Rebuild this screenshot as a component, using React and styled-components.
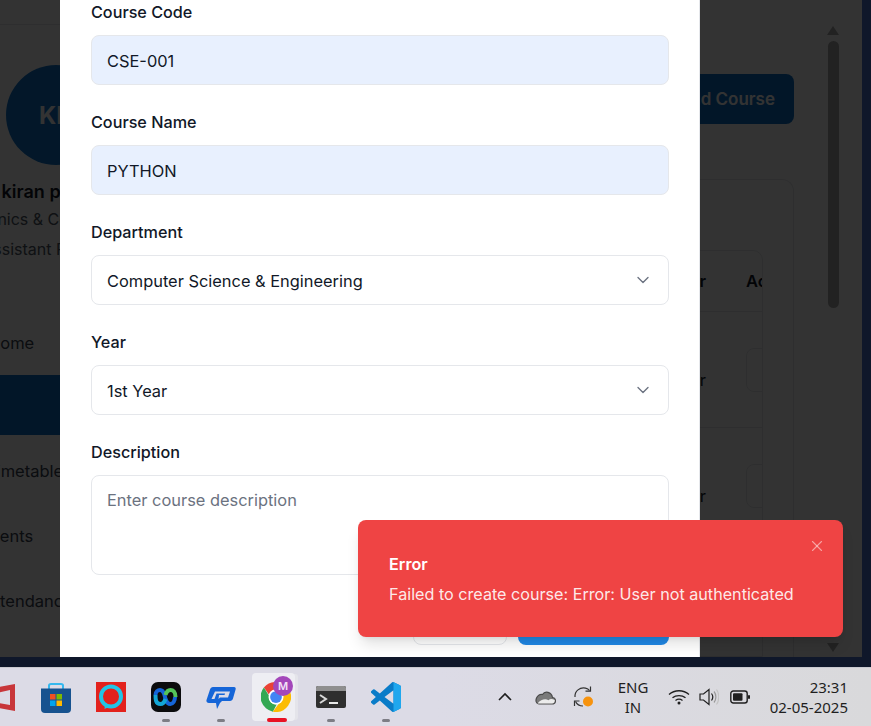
import React from "react";
import styled, { createGlobalStyle } from "styled-components";
import { ChevronDown, X } from "lucide-react";

const GlobalStyle = createGlobalStyle`
  html, body {
    margin: 0;
    padding: 0;
    height: 100%;
    overflow: hidden;
  }
  * { box-sizing: border-box; }
  body {
    font-family: Inter, "Noto Sans", "Liberation Sans", sans-serif;
    color: #111827;
    background: #0f172a;
  }
`;

const Screen = styled.div`
  width: 871px;
  height: 726px;
  display: flex;
  flex-direction: column;
  background: #0f172a;
`;
const BrowserArea = styled.div`
  height: 667px;
  padding: 0 9px 10px 0;
`;
const Viewport = styled.div`
  position: relative;
  height: 657px;
  overflow: hidden;
  background: #fff;
`;
const Shell = styled.div`
  display: flex;
  height: 100%;
  margin-left: -64px;
`;
const Sidebar = styled.aside`
  width: 240px;
  flex: none;
  padding-top: 24px;
  text-align: center;
  border-right: 1px solid #e5e7eb;
`;
const ProfileRule = styled.div`
  border-top: 1px solid #e5e7eb;
  padding-top: 40px;
`;
const Avatar = styled.div`
  width: 100px;
  height: 100px;
  margin: 0 auto 15px;
  border-radius: 50%;
  background: #0f74cc;
  color: #fff;
  font-size: 24px;
  font-weight: 700;
  display: flex;
  align-items: center;
  justify-content: center;
`;
const ProfileName = styled.div`
  font-size: 18px;
  font-weight: 600;
  line-height: 24px;
  white-space: nowrap;
`;
const ProfileLine = styled.div`
  font-size: 16px;
  line-height: 30px;
  color: #4b5563;
  white-space: nowrap;
`;
const NavList = styled.nav`
  margin-top: 46px;
  text-align: left;
`;
const NavItem = styled.div`
  height: ${(p) => (p.$active ? 60 : 65)}px;
  margin-bottom: ${(p) => (p.$active ? 3 : 0)}px;
  display: flex;
  align-items: center;
  padding-left: ${(p) => p.$indent}px;
  font-size: 16.500px;
  color: #374151;
  background: ${(p) => (p.$active ? "#0b6fc8" : "transparent")};
`;
const Main = styled.main`
  flex: 1;
  min-width: 0;
  padding: 74px 30px 0 24px;
  display: flex;
  flex-direction: column;
  align-items: flex-end;
`;
const AddButton = styled.div`
  height: 50px;
  padding: 0 19px;
  border-radius: 8px;
  background: #0b6fc8;
  color: #fff;
  font-size: 17px;
  font-weight: 600;
  display: flex;
  align-items: center;
`;
const Card = styled.section`
  width: 100%;
  flex: 1;
  margin-top: 55px;
  padding: 70px 30px 0;
  border: 1px solid #e5e7eb;
  border-bottom: 0;
  border-radius: 12px 12px 0 0;
`;
const TableBox = styled.div`
  border: 1px solid #e5e7eb;
  border-radius: 10px 10px 0 0;
  overflow: hidden;
  height: 100%;
`;
const TableRow = styled.div`
  height: ${(p) => (p.$head ? 61 : 116)}px;
  display: flex;
  align-items: ${(p) => (p.$head ? "center" : "flex-start")};
  justify-content: flex-end;
  border-bottom: 1px solid #e5e7eb;
  font-size: 16.500px;
  font-weight: ${(p) => (p.$head ? 600 : 400)};
`;
const YearCell = styled.span`
  width: 46px;
  text-align: right;
  margin-top: ${(p) => (p.$body ? 58 : 0)}px;
  color: #111827;
`;
const ActionCell = styled.span`
  width: 56px;
  padding-left: 40px;
  white-space: nowrap;
`;
const ActionButton = styled.div`
  width: 60px;
  height: 44px;
  margin-top: 36px;
  border: 1px solid #e5e7eb;
  border-radius: 8px;
  flex: none;
`;
const ActionSlot = styled.div`
  width: 56px;
  flex: none;
  padding-left: 40px;
`;
const Rail = styled.div`
  width: 38px;
  flex: none;
  display: flex;
  flex-direction: column;
  align-items: flex-start;
  padding: 26px 0 0 4px;
  background: #fff;
`;
const RailThumb = styled.div`
  width: 11px;
  height: 267px;
  margin-top: 6px;
  border-radius: 6px;
  background: #a8a8a8;
`;
const RailArrow = styled.div`
  width: 0;
  height: 0;
  margin-left: -1px;
  border-left: 6.5px solid transparent;
  border-right: 6.5px solid transparent;
  ${(p) => (p.$down ? "border-top" : "border-bottom")}: 9px solid #a8a8a8;
`;
const RailBottom = styled.div`
  margin-top: auto;
  margin-bottom: 5px;
`;
const Backdrop = styled.div`
  position: absolute;
  inset: 0;
  background: rgba(0, 0, 0, 0.8);
`;
const Modal = styled.form`
  position: absolute;
  top: 0;
  bottom: 0;
  left: 60px;
  width: 640px;
  padding: 0 30px 0 31px;
  background: #fff;
  border-right: 1px solid #e5e7eb;
  overflow: hidden;
`;
const Field = styled.div`
  margin-bottom: 25px;
`;
const Label = styled.label`
  display: block;
  height: 24px;
  margin-bottom: 11px;
  font-size: 16.200px;
  font-weight: 500;
  line-height: 24px;
  color: #111827;
`;
const TextInput = styled.input`
  display: block;
  width: 100%;
  height: 50px;
  padding: 2px 15px 0;
  border: 1px solid #e5e7eb;
  border-radius: 8px;
  background: #e8f0fe;
  color: #111827;
  font: inherit;
  font-size: 16.400px;
  outline: none;
`;
const SelectBox = styled.div`
  height: 50px;
  padding: 2px 15px 0;
  border: 1px solid #e5e7eb;
  border-radius: 8px;
  display: flex;
  align-items: center;
  justify-content: space-between;
  font-size: 16.400px;
  color: #111827;
  svg { color: #6b7280; margin-top: -2px; }
`;
const TextArea = styled.textarea`
  display: block;
  width: 100%;
  height: 100px;
  padding: 14px 15px;
  border: 1px solid #e5e7eb;
  border-radius: 8px;
  font: inherit;
  font-size: 16.400px;
  resize: none;
  outline: none;
  &::placeholder { color: #6b7280; opacity: 1; }
`;
const Footer = styled.div`
  display: flex;
  justify-content: flex-end;
  gap: 11px;
  height: 45px;
`;
const CancelButton = styled.div`
  width: 94px;
  border: 1px solid #e5e7eb;
  border-radius: 8px;
`;
const SubmitButton = styled.div`
  width: 151px;
  border-radius: 8px;
  background: #2189e6;
`;
const Toast = styled.div`
  position: absolute;
  top: 520px;
  left: 358px;
  width: 485px;
  height: 117px;
  padding: 32px 31px;
  border-radius: 8px;
  background: #ef4444;
  color: #fff;
  box-shadow: 0 10px 15px -3px rgba(0, 0, 0, 0.12), 0 4px 6px -4px rgba(0, 0, 0, 0.1);
`;
const ToastTitle = styled.div`
  font-size: 16.200px;
  font-weight: 600;
  line-height: 24px;
`;
const ToastText = styled.div`
  margin-top: 6px;
  font-size: 16.160px;
  line-height: 24px;
  color: rgba(255, 255, 255, 0.9);
  white-space: nowrap;
`;
const ToastClose = styled.div`
  position: absolute;
  top: 17px;
  right: 17px;
  display: flex;
  color: rgba(255, 255, 255, 0.5);
`;
const Taskbar = styled.footer`
  height: 59px;
  display: flex;
  align-items: stretch;
  background: linear-gradient(90deg, #dcdbe6 0%, #dcdbe6 50%, #d9d9db 100%);
  border-top: 1px solid #c9c9d0;
`;
const AppGroup = styled.div`
  display: flex;
  margin-left: -27px;
`;
const AppSlot = styled.div`
  position: relative;
  width: 55px;
  display: flex;
  justify-content: center;
  padding-top: ${(p) => p.$top}px;
`;
const AppIcon = styled.div`
  position: relative;
  display: flex;
  height: fit-content;
`;
const RunDot = styled.span`
  position: absolute;
  left: 50%;
  bottom: 4px;
  width: 8px;
  height: 3px;
  margin-left: -4px;
  border-radius: 2px;
  background: #7d7d85;
`;
const ActiveTile = styled.div`
  position: absolute;
  top: 5px;
  left: 4px;
  width: 43px;
  height: 48px;
  border-radius: 4px;
  background: #eeeef3;
  box-shadow: 4px 0 0 -1px #e4e4ea;
`;
const ActiveBar = styled.span`
  position: absolute;
  left: 50%;
  bottom: 4px;
  width: 20px;
  height: 4px;
  margin-left: -9px;
  border-radius: 2px;
  background: #e81224;
`;
const ProfileBadge = styled.span`
  position: absolute;
  top: 8px;
  left: 25px;
  width: 20px;
  height: 20px;
  border-radius: 50%;
  background: #a347ba;
  color: #f3e3f7;
  font-size: 11px;
  font-weight: 600;
  display: flex;
  align-items: center;
  justify-content: center;
`;
const Tray = styled.div`
  margin-left: 72px;
  display: flex;
  align-items: center;
`;
const TraySlot = styled.div`
  width: ${(p) => p.$w}px;
  display: flex;
  justify-content: center;
  align-items: center;
`;
const LangBlock = styled.div`
  width: 60px;
  font-family: "Noto Sans", sans-serif;
  font-size: 15px;
  line-height: 20px;
  text-align: center;
  color: #1f1f1f;
`;
const Clock = styled.div`
  width: 90px;
  font-family: "Noto Sans", sans-serif;
  font-size: 15px;
  line-height: 20px;
  text-align: right;
  color: #1f1f1f;
  white-space: nowrap;
`;

const OfficeIcon = () => (
  <svg width="30" height="30" viewBox="0 0 30 30" fill="#c8363a">
    <path d="M29 2 8 6 1 11v9l7 5 21 4V2Zm-5 6v15L9 20.500V11.500L24 8Z" />
  </svg>
);
const StoreIcon = () => (
  <svg width="30" height="31" viewBox="0 0 30 31">
    <path d="M8 7V3.500C8 2.500 9 2 10 2h10c1 0 2 .5 2 1.500V7" fill="none" stroke="#35b8ee" strokeWidth="2" />
    <path d="M0 6.500h30V27a4 4 0 0 1-4 4H4a4 4 0 0 1-4-4Z" fill="#17528f" />
    <rect x="9" y="12" width="5.500" height="5.500" fill="#f25022" />
    <rect x="15.500" y="12" width="5.500" height="5.500" fill="#7fba00" />
    <rect x="9" y="18.500" width="5.500" height="5.500" fill="#00a4ef" />
    <rect x="15.500" y="18.500" width="5.500" height="5.500" fill="#ffb900" />
  </svg>
);
const AlexaIcon = () => (
  <svg width="30" height="30" viewBox="0 0 30 30">
    <rect width="30" height="30" fill="#e3211c" />
    <circle cx="15" cy="14.500" r="10" fill="none" stroke="#22c4e6" strokeWidth="4" />
    <path d="M9 22 8.500 27l6.500-3Z" fill="#22c4e6" />
  </svg>
);
const WebexIcon = () => (
  <svg width="30" height="30" viewBox="0 0 30 30">
    <rect width="30" height="30" rx="7" fill="#0b0b0d" />
    <path d="M4.500 13c0-3.500 2.500-5 4.500-5s3.500 1.500 4.500 5l1 4c1 3 2.500 5 5 5s4.500-3 4.500-7" fill="none" stroke="#1565d8" strokeWidth="4" />
    <path d="M4.500 13c0 4 0 9 5 9 2.500 0 4-2 5-5" fill="none" stroke="#12a5d6" strokeWidth="4" />
    <path d="M14.500 13c1-3.500 2.500-5 5-5s5 2 5 7" fill="none" stroke="#55c45a" strokeWidth="4" />
  </svg>
);
const ChatIcon = () => (
  <svg width="30" height="24" viewBox="0 0 30 24">
    <path d="M7 1h21c1.500 0 2 1 1.600 2.500l-2.600 9c-.4 1.500-1.500 2.500-3 2.500H16l-2 2-3 6-1-6H3c-2 0-3-1.500-2.500-3L4 3.500C4.500 2 5.500 1 7 1Z" fill="#1565d8" />
    <path d="M9 5.500h15l-2 6h-8l-1.500 1.500 .5-4h5.500l.6-1.500H10.500L8.500 13H5.500Z" fill="#dcdbe6" />
  </svg>
);
const ChromeIcon = () => (
  <svg width="30" height="30" viewBox="0 0 24 24">
    <path d="M12 0a12 12 0 0 1 10.400 6H12a6 6 0 0 0-5.700 4L2.300 4.400A12 12 0 0 1 12 0Z" fill="#ea4335" />
    <path d="M2.300 4.400 7 12a5 5 0 0 0 5.500 6l-3 5.700A12 12 0 0 1 2.300 4.400Z" fill="#34a853" />
    <path d="M22.400 6A12 12 0 0 1 9.500 23.700L15.500 15.500A5 5 0 0 0 16.500 8Z" fill="#fbbc04" />
    <circle cx="12" cy="12" r="6" fill="#fff" />
    <circle cx="12" cy="12" r="4.700" fill="#4285f4" />
  </svg>
);
const TerminalIcon = () => (
  <svg width="30" height="22" viewBox="0 0 30 22">
    <rect width="30" height="22" rx="2" fill="#2f2f2f" />
    <path d="M0 2a2 2 0 0 1 2-2h26a2 2 0 0 1 2 2v3H0Z" fill="#8f8f8f" />
    <path d="m4 9 6 4-6 4" fill="none" stroke="#d8d8d8" strokeWidth="2" />
    <path d="M13 17h9" stroke="#e8e8e8" strokeWidth="2" />
  </svg>
);
const VsCodeIcon = () => (
  <svg width="30" height="30" viewBox="0 0 24 24">
    <path d="M23.150 2.587 18.210.21a1.494 1.494 0 0 0-1.705.29l-9.460 8.630-4.120-3.128a.999.999 0 0 0-1.276.057L.327 7.261A1 1 0 0 0 .326 8.740L3.899 12 .326 15.260a1 1 0 0 0 .001 1.479L1.650 17.940a.999.999 0 0 0 1.276.057l4.120-3.128 9.460 8.630a1.492 1.492 0 0 0 1.704.29l4.942-2.377A1.500 1.500 0 0 0 24 20.060V3.939a1.500 1.500 0 0 0-.85-1.352zm-5.146 14.861L10.826 12l7.178-5.448v10.896z" fill="#0a7cc8" />
    <path d="M18 .2 23.150 2.587A1.500 1.500 0 0 1 24 3.939V20.060a1.500 1.500 0 0 1-.85 1.352L18 23.900v-6.450V6.552Z" fill="#1fa7ee" />
  </svg>
);
const TrayChevron = () => (
  <svg width="16" height="10" viewBox="0 0 16 10" fill="none" stroke="#1f1f1f" strokeWidth="1.600">
    <path d="m2 8 6-6 6 6" />
  </svg>
);
const CloudIcon = () => (
  <svg width="22" height="16" viewBox="0 0 22 16">
    <path d="M5 15h13c4.500 0 4.500-6 .5-6.500C17.500 3 11 1.500 8.500 5.500 3 4-1 14 5 15Z" fill="#7a7a7a" stroke="#4a4a4a" strokeWidth="1.200" />
    <path d="M3.500 14.400H18c2 0 3-1.500 2.800-3.400-3-1.500-5-1-6.300.2-3.500-2-7.500-.5-11 3.200Z" fill="#ececec" />
  </svg>
);
const SyncIcon = () => (
  <svg width="22" height="24" viewBox="0 0 22 24" fill="none" stroke="#333" strokeWidth="1.200">
    <path d="M2 12C1.500 6 7 2 12.500 3.200c1.500.3 3 1 4 2.300" />
    <path d="M12.500 6.200h5V1.500" />
    <path d="M2.500 16.500c1.200 2.500 4 4.500 7.500 4.500" />
    <path d="M1.500 21v-5h5" />
    <circle cx="15" cy="16.500" r="5" fill="#f7930e" stroke="none" />
  </svg>
);
const WifiIcon = () => (
  <svg width="22" height="16" viewBox="0 0 22 16" fill="none" stroke="#1f1f1f" strokeWidth="1.300">
    <path d="M1 5.500c5.500-5 14.500-5 20 0" />
    <path d="M4.500 8.800c3.500-3 9.500-3 13 0" />
    <path d="M7.500 11.500c2-1.500 5-1.500 7 0" />
    <circle cx="11" cy="14" r="1.500" fill="#1f1f1f" stroke="none" />
  </svg>
);
const SpeakerIcon = () => (
  <svg width="20" height="18" viewBox="0 0 20 18" fill="none" stroke="#1f1f1f" strokeWidth="1.200">
    <path d="M1 6v6h3.500L10 16.500V1.500L4.500 6Z" />
    <path d="M12.500 5.500c1.500 2 1.500 5 0 7" />
    <path d="M15 3.500c2.500 3 2.500 8 0 11" stroke="#999" />
    <path d="M17.500 1.500c3 4 3 11 0 15" stroke="#c4c4c4" />
  </svg>
);
const BatteryIcon = () => (
  <svg width="20" height="14" viewBox="0 0 20 14">
    <rect x=".8" y="1" width="16.400" height="12" rx="2.500" fill="none" stroke="#1f1f1f" strokeWidth="1.400" />
    <rect x="3" y="3.200" width="9.500" height="7.600" rx="1" fill="#1f1f1f" />
    <rect x="18" y="5" width="2" height="4" rx="1" fill="#1f1f1f" />
  </svg>
);

const apps = [
  { key: "office", top: 14, icon: <OfficeIcon /> },
  { key: "store", top: 14, icon: <StoreIcon /> },
  { key: "alexa", top: 14, icon: <AlexaIcon /> },
  { key: "webex", top: 14, icon: <WebexIcon />, running: true },
  { key: "chat", top: 18, icon: <ChatIcon />, running: true },
  { key: "chrome", top: 14, icon: <ChromeIcon />, active: true },
  { key: "terminal", top: 18, icon: <TerminalIcon />, running: true },
  { key: "code", top: 14, icon: <VsCodeIcon />, running: true },
];

export default function App() {
  return (
    <Screen>
      <GlobalStyle />
      <BrowserArea>
        <Viewport>
          <Shell>
            <Sidebar>
              <ProfileRule>
                <Avatar>KP</Avatar>
                <ProfileName>kiran prasad</ProfileName>
                <ProfileLine>Electronics &amp; Communication</ProfileLine>
                <ProfileLine>Assistant Professor</ProfileLine>
              </ProfileRule>
              <NavList>
                <NavItem $indent={52}>Home</NavItem>
                <NavItem $active $indent={140}>Courses</NavItem>
                <NavItem $indent={50}>Timetable</NavItem>
                <NavItem $indent={45}>Events</NavItem>
                <NavItem $indent={48}>Attendance</NavItem>
              </NavList>
            </Sidebar>
            <Main>
              <AddButton>Add Course</AddButton>
              <Card>
                <TableBox>
                  <TableRow $head>
                    <YearCell>Year</YearCell>
                    <ActionCell>Actions</ActionCell>
                  </TableRow>
                  <TableRow>
                    <YearCell $body>Year</YearCell>
                    <ActionSlot><ActionButton /></ActionSlot>
                  </TableRow>
                  <TableRow>
                    <YearCell $body>Year</YearCell>
                    <ActionSlot><ActionButton /></ActionSlot>
                  </TableRow>
                </TableBox>
              </Card>
            </Main>
            <Rail>
              <RailArrow />
              <RailThumb />
              <RailBottom><RailArrow $down /></RailBottom>
            </Rail>
          </Shell>
          <Backdrop />
          <Modal>
            <Field>
              <Label>Course Code</Label>
              <TextInput readOnly value="CSE-001" />
            </Field>
            <Field>
              <Label>Course Name</Label>
              <TextInput readOnly value="PYTHON" />
            </Field>
            <Field>
              <Label>Department</Label>
              <SelectBox>
                Computer Science &amp; Engineering
                <ChevronDown size={20} strokeWidth={1.6} />
              </SelectBox>
            </Field>
            <Field>
              <Label>Year</Label>
              <SelectBox>
                1st Year
                <ChevronDown size={20} strokeWidth={1.6} />
              </SelectBox>
            </Field>
            <Field>
              <Label>Description</Label>
              <TextArea readOnly placeholder="Enter course description" />
            </Field>
            <Footer>
              <CancelButton />
              <SubmitButton />
            </Footer>
          </Modal>
          <Toast>
            <ToastTitle>Error</ToastTitle>
            <ToastText>Failed to create course: Error: User not authenticated</ToastText>
            <ToastClose><X size={18} strokeWidth={1.5} /></ToastClose>
          </Toast>
        </Viewport>
      </BrowserArea>
      <Taskbar>
        <AppGroup>
          {apps.map((app) => (
            <AppSlot key={app.key} $top={app.top}>
              {app.active && <ActiveTile />}
              <AppIcon>{app.icon}</AppIcon>
              {app.active && <ProfileBadge>M</ProfileBadge>}
              {app.active && <ActiveBar />}
              {app.running && <RunDot />}
            </AppSlot>
          ))}
        </AppGroup>
        <Tray>
          <TraySlot $w={40}><TrayChevron /></TraySlot>
          <TraySlot $w={40}><CloudIcon /></TraySlot>
          <TraySlot $w={38}><SyncIcon /></TraySlot>
          <LangBlock>ENG<br />IN</LangBlock>
          <TraySlot $w={32}><WifiIcon /></TraySlot>
          <TraySlot $w={27}><SpeakerIcon /></TraySlot>
          <TraySlot $w={36}><BatteryIcon /></TraySlot>
          <Clock>23:31<br />02-05-2025</Clock>
        </Tray>
      </Taskbar>
    </Screen>
  );
}
